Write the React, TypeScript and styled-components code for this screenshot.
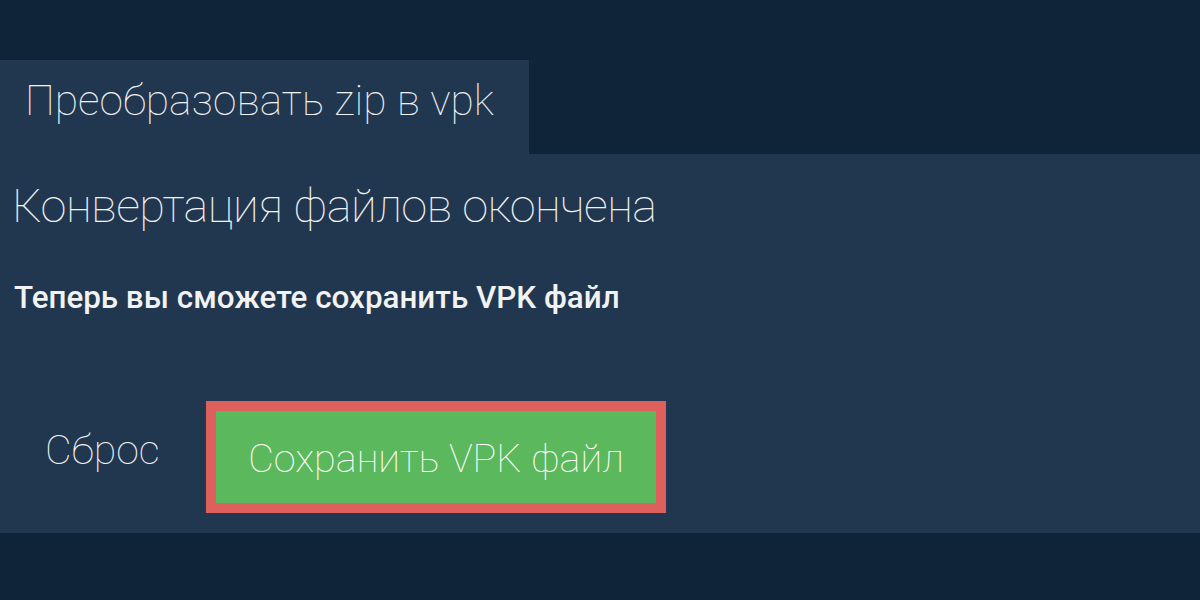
import React from "react";
import styled, { createGlobalStyle } from "styled-components";

const Global = createGlobalStyle`
  html, body { margin: 0; padding: 0; background: #0f2439; }
  body { font-family: Roboto, "Noto Sans", sans-serif; color: #f2f2f2; }
`;

const Page = styled.div`
  width: 1200px;
  height: 600px;
  background: #0f2439;
  padding-top: 60px;
  box-sizing: border-box;
`;

const TabBar = styled.div`
  display: flex;
`;

const Tab = styled.div`
  width: 529px;
  height: 94px;
  box-sizing: border-box;
  padding: 20px 0 0 25px;
  background: #213750;
  font-size: 42.5px;
  line-height: 42px;
  font-weight: 100;
  color: #f2f2f2;
  white-space: nowrap;
`;

const Panel = styled.div`
  background: #213750;
  box-sizing: border-box;
  padding: 24px 14px 20px 14px;
  display: flex;
  flex-direction: column;
`;

const Title = styled.h1`
  margin: 0 0 0 -2px;
  font-size: 47px;
  line-height: 56px;
  font-weight: 100;
  letter-spacing: -0.6px;
  color: #f2f2f2;
  white-space: nowrap;
`;

const Subtitle = styled.p`
  margin: 46px 0 0 0;
  font-size: 31.4px;
  line-height: 36px;
  font-weight: 500;
  color: #f2f2f2;
  white-space: nowrap;
`;

const Actions = styled.div`
  display: flex;
  align-items: center;
  margin-top: 85px;
`;

const ResetButton = styled.button`
  width: 192px;
  box-sizing: border-box;
  text-align: left;
  background: none;
  border: none;
  padding: 0 0 14px 31px;
  font-family: inherit;
  font-size: 41px;
  line-height: 48px;
  font-weight: 100;
  color: #f2f2f2;
  cursor: pointer;
`;

const SaveButton = styled.button`
  width: 460px;
  height: 112px;
  box-sizing: border-box;
  border: 10px solid #de605c;
  background: #5cb85c;
  font-family: inherit;
  font-size: 39.6px;
  font-weight: 100;
  color: #ffffff;
  cursor: pointer;
  padding: 3px 0 0 0;
  white-space: nowrap;
`;

export default function App() {
  return (
    <>
      <Global />
      <Page>
        <TabBar>
          <Tab>Преобразовать zip в vpk</Tab>
        </TabBar>
        <Panel>
          <Title>Конвертация файлов окончена</Title>
          <Subtitle>Теперь вы сможете сохранить VPK файл</Subtitle>
          <Actions>
            <ResetButton>Сброс</ResetButton>
            <SaveButton>Сохранить VPK файл</SaveButton>
          </Actions>
        </Panel>
      </Page>
    </>
  );
}
